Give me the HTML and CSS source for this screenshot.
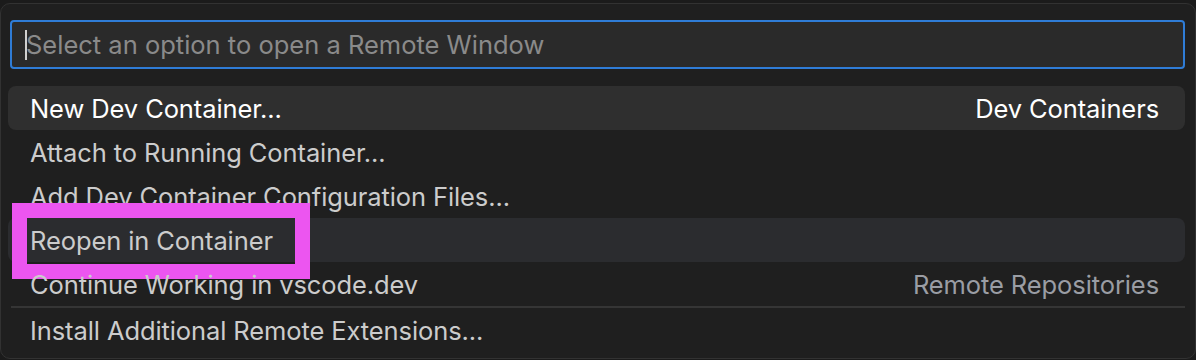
FILE: index.html
```html
<!DOCTYPE html>
<html lang="en">
<head>
  <meta charset="UTF-8">
  <meta name="viewport" content="width=device-width, initial-scale=1.0">
  <title>Remote Window</title>
  <link rel="stylesheet" href="styles.css">
</head>
<body>
  <!-- Quick Pick -->
  <div class="quick-pick">
    <div class="quick-input">
      <span class="caret"></span>
      <span class="placeholder">Select an option to open a Remote Window</span>
    </div>

    <div class="pick-list">
      <div class="pick-row selected">
        <span class="pick-label">New Dev Container...</span>
        <span class="pick-group">Dev Containers</span>
      </div>
      <div class="pick-row">
        <span class="pick-label">Attach to Running Container...</span>
      </div>
      <div class="pick-row">
        <span class="pick-label">Add Dev Container Configuration Files...</span>
      </div>
      <div class="pick-row hovered">
        <span class="pick-label">Reopen in Container</span>
        <!-- Annotation box -->
        <div class="highlight"></div>
      </div>
      <div class="pick-row">
        <span class="pick-label">Continue Working in vscode.dev</span>
        <span class="pick-group muted">Remote Repositories</span>
      </div>
      <div class="pick-separator"></div>
      <div class="pick-row">
        <span class="pick-label">Install Additional Remote Extensions...</span>
      </div>
    </div>
  </div>
</body>
</html>
```

FILE: styles.css
```css
/* General Reset */
* {
  margin: 0;
  padding: 0;
  box-sizing: border-box;
}

body {
  font-family: 'Inter', 'Noto Sans', sans-serif;
  background-color: #1b1b1b;
  color: #cccccc;
  width: 1196px;
  height: 360px;
  overflow: hidden;
  padding-top: 3px;
}

/* Quick Pick Widget */
.quick-pick {
  background-color: #1f1f1f;
  border: 1px solid #323232;
  border-radius: 10px;
  height: 356px;
  overflow: hidden;
  padding: 16px 10px 0 7px;
}

.quick-input {
  position: relative;
  display: flex;
  align-items: center;
  height: 49px;
  margin-left: 2px;
  border: 2px solid #2f7cd6;
  border-radius: 4px;
  background-color: #2a2a2a;
  padding-left: 13px;
}

.caret {
  width: 2px;
  height: 30px;
  background-color: #d0d0d0;
  margin-right: -1px;
}

.placeholder {
  font-size: 25.5px;
  color: #8a8a8a;
}

/* List */
.pick-list {
  margin-top: 17px;
  display: flex;
  flex-direction: column;
}

.pick-row {
  position: relative;
  display: flex;
  align-items: center;
  justify-content: space-between;
  height: 44px;
  padding: 0 26px 0 22px;
  border-radius: 8px;
  font-size: 25.5px;
  letter-spacing: -0.1px;
  color: #cccccc;
}

.pick-row.selected {
  background-color: #2f2f2f;
  color: #ffffff;
}

.pick-row.hovered {
  background-color: #2b2c2f;
}

.pick-group.muted {
  color: #9a9da4;
}

.pick-separator {
  height: 2px;
  margin-left: 3px;
  background-color: #353535;
}

/* Magenta annotation */
.highlight {
  position: absolute;
  left: 4px;
  top: -15px;
  width: 298px;
  height: 76px;
  border: 15px solid #ec55f0;
}
```
